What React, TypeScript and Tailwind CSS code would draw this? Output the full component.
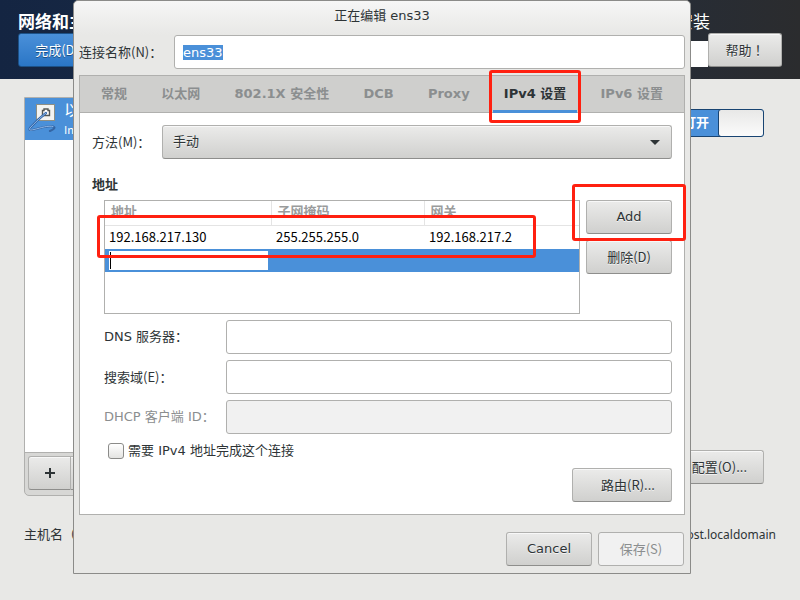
import { useEffect, useRef } from "react";
import clsx from "clsx";

const TABS = ["常规", "以太网", "802.1X 安全性", "DCB", "Proxy", "IPv4 设置", "IPv6 设置"];
const ACTIVE_TAB = "IPv4 设置";

const BUTTON =
  "h-[34px] rounded-[3px] border border-[#b0b0ae] border-b-[#8e8e8c] bg-linear-to-b from-[#ebebea] to-[#d0d0ce] inset-shadow-[0_1px_#f8f8f8] text-[#2e3436] [text-shadow:0_1px_#f4f4f4]";
const FIELD = "h-[34px] min-w-0 flex-1 rounded-[3px] border border-[#b0b0ae] bg-white px-2 outline-none disabled:bg-[#f1f1f1]";
const CJK = "font-['Noto_Sans_CJK_SC',sans-serif]";

function Highlight({ className }: { className: string }) {
  return <span aria-hidden className={clsx("pointer-events-none absolute z-10 rounded-[3px] border-3 border-[#ff2010]", className)} />;
}

function EthernetIcon() {
  return (
    <svg width="30" height="34" viewBox="0 0 30 34" fill="none" className="shrink-0">
      <rect x="8.5" y="6.5" width="18" height="16" fill="#f4f4f1" stroke="#8f8f83" />
      <path d="M14.5 17.500V12.500H16V11h4v1.500h1.500v5Z" fill="#fff" stroke="#555753" strokeWidth="1.400" />
      <path d="M18 15C14 18 6 25.500 2 30c-1.500 2.500.5 2.300 4 1.500 7-1.600 14-4.300 19-3 3 1.200.5 3-3 4.500" stroke="#3465a4" strokeWidth="2.200" strokeLinecap="round" />
      <path d="M18 15C14 18 6 25.500 2 30c-1.500 2.500.5 2.300 4 1.500 7-1.600 14-4.300 19-3" stroke="#8db7e8" strokeWidth="1" strokeLinecap="round" />
    </svg>
  );
}

function InstallerPage() {
  return (
    <div className="flex min-h-screen flex-col">
      <header className="flex h-[79px] items-start justify-between bg-linear-to-r from-[#142542] via-[#1c2c45] to-[#2b2c2e] px-[18px] pt-[9px] text-white">
        <div>
          <h1 className="h-6 pt-px text-[17px] leading-6 font-bold">网络和主机名(H)</h1>
          <button className={clsx(CJK, "h-[34px] w-[78px] rounded-[3px] border border-[#1c5187] bg-linear-to-b from-[#4a90d9] to-[#2a76c6] text-white [text-shadow:0_1px_#1c5187]")}>
            完成(D)
          </button>
        </div>
        <div className="flex">
          <div className="flex flex-col items-end">
            <p className="-mr-0.5 h-8 pt-px text-[17px] leading-6">CENTOS 7 安装</p>
            <div className="h-[26px] w-[60px] bg-white" />
          </div>
          <button className={clsx(BUTTON, "mt-6 w-[74px] font-['Noto_Sans_CJK_TC',sans-serif]")}>帮助！</button>
        </div>
      </header>

      <main className="flex items-stretch justify-between pt-[18px] pr-9 pl-6">
        <div className="flex h-[399px] w-[240px] flex-col rounded-b-[5px] border border-[#b0b0ae] bg-[#d7d7d5]">
          <div className="flex-1 bg-white">
            <div className="flex h-[42px] bg-[#4a90d9] pl-[3px] text-white">
              <EthernetIcon />
              <div className="pt-0.5 pl-1.5 whitespace-nowrap">
                <p className="text-[16px] leading-[22px]">以太网 (ens33)</p>
                <p className={clsx(CJK, "text-[11px] leading-[14px]")}>Intel Corporation</p>
              </div>
            </div>
          </div>
          <div className="flex h-[43px] border-t border-[#b0b0ae] p-[3px]">
            <button aria-label="添加" className={clsx(BUTTON, "flex h-9 w-[43px] items-center justify-center rounded-r-none")}>
              <svg width="12" height="12" viewBox="0 0 12 12" stroke="#2e3436" strokeWidth="2">
                <path d="M6 1v10M1 6h10" />
              </svg>
            </button>
            <button aria-label="移除" className={clsx(BUTTON, "h-9 w-[43px] rounded-l-none border-l-0")} />
          </div>
        </div>
        <div className="flex flex-col items-end justify-between pt-3 pb-3">
          <label className="flex h-7 w-[92px] overflow-hidden rounded-[3px] border border-[#184472] bg-[#4a90d9]">
            <input type="checkbox" role="switch" defaultChecked className="sr-only" />
            <span className="flex-1 pt-[3px] pr-2.5 text-right font-bold whitespace-nowrap text-white">打开</span>
            <span className="-m-px w-[46px] rounded-[3px] border border-[#184472] bg-linear-to-b from-[#e8e8e7] to-[#fbfbfb]" />
          </label>
          <button className={clsx(BUTTON, CJK, "px-4")}>配置(O)...</button>
        </div>
      </main>

      <footer className="flex justify-between px-6 pt-[29px]">
        <span>主机名（H）：</span>
        <span className="font-['Noto_Sans',sans-serif] text-[12px]">localhost.localdomain</span>
      </footer>
    </div>
  );
}

function AddressTable() {
  const head = "h-6 pl-1.5 text-left align-top font-bold leading-5 text-[#9a9c9c]";
  return (
    <div className="relative h-[114px] min-w-0 flex-1 border border-[#b0b0ae] bg-white">
      <table className={clsx(CJK, "w-full table-fixed border-collapse text-black")}>
        <thead>
          <tr className="border-b border-[#e4e4e4]">
            <th className={clsx(head, "w-[166px] border-r border-[#e4e4e4]")}>地址</th>
            <th className={clsx(head, "w-[153px] border-r border-[#e4e4e4]")}>子网掩码</th>
            <th className={head}>网关</th>
          </tr>
        </thead>
        <tbody>
          <tr className="h-6">
            <td className="pl-1">192.168.217.130</td>
            <td className="pl-[5px]">255.255.255.0</td>
            <td className="pl-[5px]">192.168.217.2</td>
          </tr>
          <tr className="h-[23px] bg-[#4a90d9]">
            <td className="pr-[3px] pl-1">
              <div className="flex h-[19px] bg-white py-px pl-px">
                <span className="w-px bg-black" />
                <input aria-label="地址" className="min-w-0 flex-1 outline-none" />
              </div>
            </td>
            <td />
            <td />
          </tr>
        </tbody>
      </table>
      <Highlight className="top-[14px] right-[43px] -left-2 h-[43px]" />
    </div>
  );
}

export default function App() {
  const nameRef = useRef<HTMLInputElement>(null);

  useEffect(() => {
    nameRef.current?.focus();
    nameRef.current?.select();
  }, []);

  return (
    <div className="relative min-h-screen overflow-hidden bg-[#e8e8e6] font-['DejaVu_Sans','Noto_Sans_CJK_SC',sans-serif] text-[13px] leading-5 text-[#2e3436]">
      <InstallerPage />

      <div role="dialog" aria-labelledby="dialog-title" className="absolute top-0 right-[109px] left-[73px] z-20 rounded-t-[5px] border border-[#8b8b89] bg-[#e8e8e6] px-[5px] pb-[7px]">
        <div className="-mx-[5px] h-[34px] rounded-t-[5px] bg-linear-to-b from-[#f6f6f6] to-[#e8e8e6]">
          <h2 id="dialog-title" className="pt-[5px] text-center">正在编辑 ens33</h2>
        </div>

        <div className="flex items-center">
          <label htmlFor="name" className={clsx(CJK, "w-[95px]")}>连接名称(N)：</label>
          <input id="name" ref={nameRef} defaultValue="ens33" className={clsx(FIELD, "selection:bg-[#4a90d9] selection:text-white")} />
        </div>

        <div className="mt-1.5 border border-[#b0b0ae] bg-white">
          <div role="tablist" className="flex h-[37px] justify-between border-b border-[#b0b0ae] bg-[#cfcfcd] px-[10px]">
            {TABS.map((tab) => (
              <button
                key={tab}
                role="tab"
                aria-selected={tab === ACTIVE_TAB}
                className={clsx(
                  "relative h-[37px] border-b-3 px-[11px] pt-0.5 font-bold whitespace-nowrap",
                  tab === ACTIVE_TAB ? "border-[#4a90d9]" : "border-transparent text-[#8b8e8f]"
                )}
              >
                {tab}
                {tab === ACTIVE_TAB && <Highlight className="-top-1.5 -right-1 -left-1 h-[53px]" />}
              </button>
            ))}
          </div>

          <div className="p-3">
            <div className="flex items-center">
              <label htmlFor="method" className={clsx(CJK, "w-[70px]")}>方法(M)：</label>
              <div className="relative flex-1">
                <select id="method" className={clsx(BUTTON, "block w-full appearance-none px-2.5")}>
                  <option>手动</option>
                </select>
                <svg width="10" height="5" viewBox="0 0 10 5" className="pointer-events-none absolute top-[15px] right-3">
                  <path d="M0 0h10L5 5Z" fill="#2e3436" />
                </svg>
              </div>
            </div>

            <h3 className="mt-4 font-bold">地址</h3>

            <div className="mt-[5px] ml-3 flex flex-col gap-1.5">
              <div className="flex gap-1.5">
                <AddressTable />
                <div className="flex w-[86px] flex-col gap-1.5">
                  <div className="relative flex flex-col">
                    <button className={BUTTON}>Add</button>
                    <Highlight className="-top-4 -right-[14px] -left-[14px] h-[57px]" />
                  </div>
                  <button className={clsx(BUTTON, CJK)}>删除(D)</button>
                </div>
              </div>
              <div className="flex items-center">
                <label htmlFor="dns" className="w-[122px]">DNS 服务器：</label>
                <input id="dns" className={FIELD} />
              </div>
              <div className="flex items-center">
                <label htmlFor="search" className={clsx(CJK, "w-[122px]")}>搜索域(E)：</label>
                <input id="search" className={FIELD} />
              </div>
              <div className="flex items-center">
                <label htmlFor="client-id" className="w-[122px] whitespace-nowrap text-[#8b8e8f]">DHCP 客户端 ID：</label>
                <input id="client-id" disabled className={FIELD} />
              </div>
              <label className="flex items-center gap-1 py-px pl-1">
                <input type="checkbox" className="size-4 appearance-none rounded-[3px] border border-[#8b8b89] bg-linear-to-b from-white to-[#e4e4e2]" />
                需要 IPv4 地址完成这个连接
              </label>
              <button className={clsx(BUTTON, CJK, "w-[100px] self-end pl-3")}>路由(R)...</button>
            </div>
          </div>
        </div>

        <div className="mt-[17px] flex justify-end gap-1.5 pr-px">
          <button className={clsx(BUTTON, "w-[86px]")}>Cancel</button>
          <button disabled className={clsx(CJK, "h-[34px] w-[86px] rounded-[3px] border border-[#b0b0ae] bg-[#f1f1f1] text-[#8b8e8f]")}>
            保存(S)
          </button>
        </div>
      </div>
    </div>
  );
}
